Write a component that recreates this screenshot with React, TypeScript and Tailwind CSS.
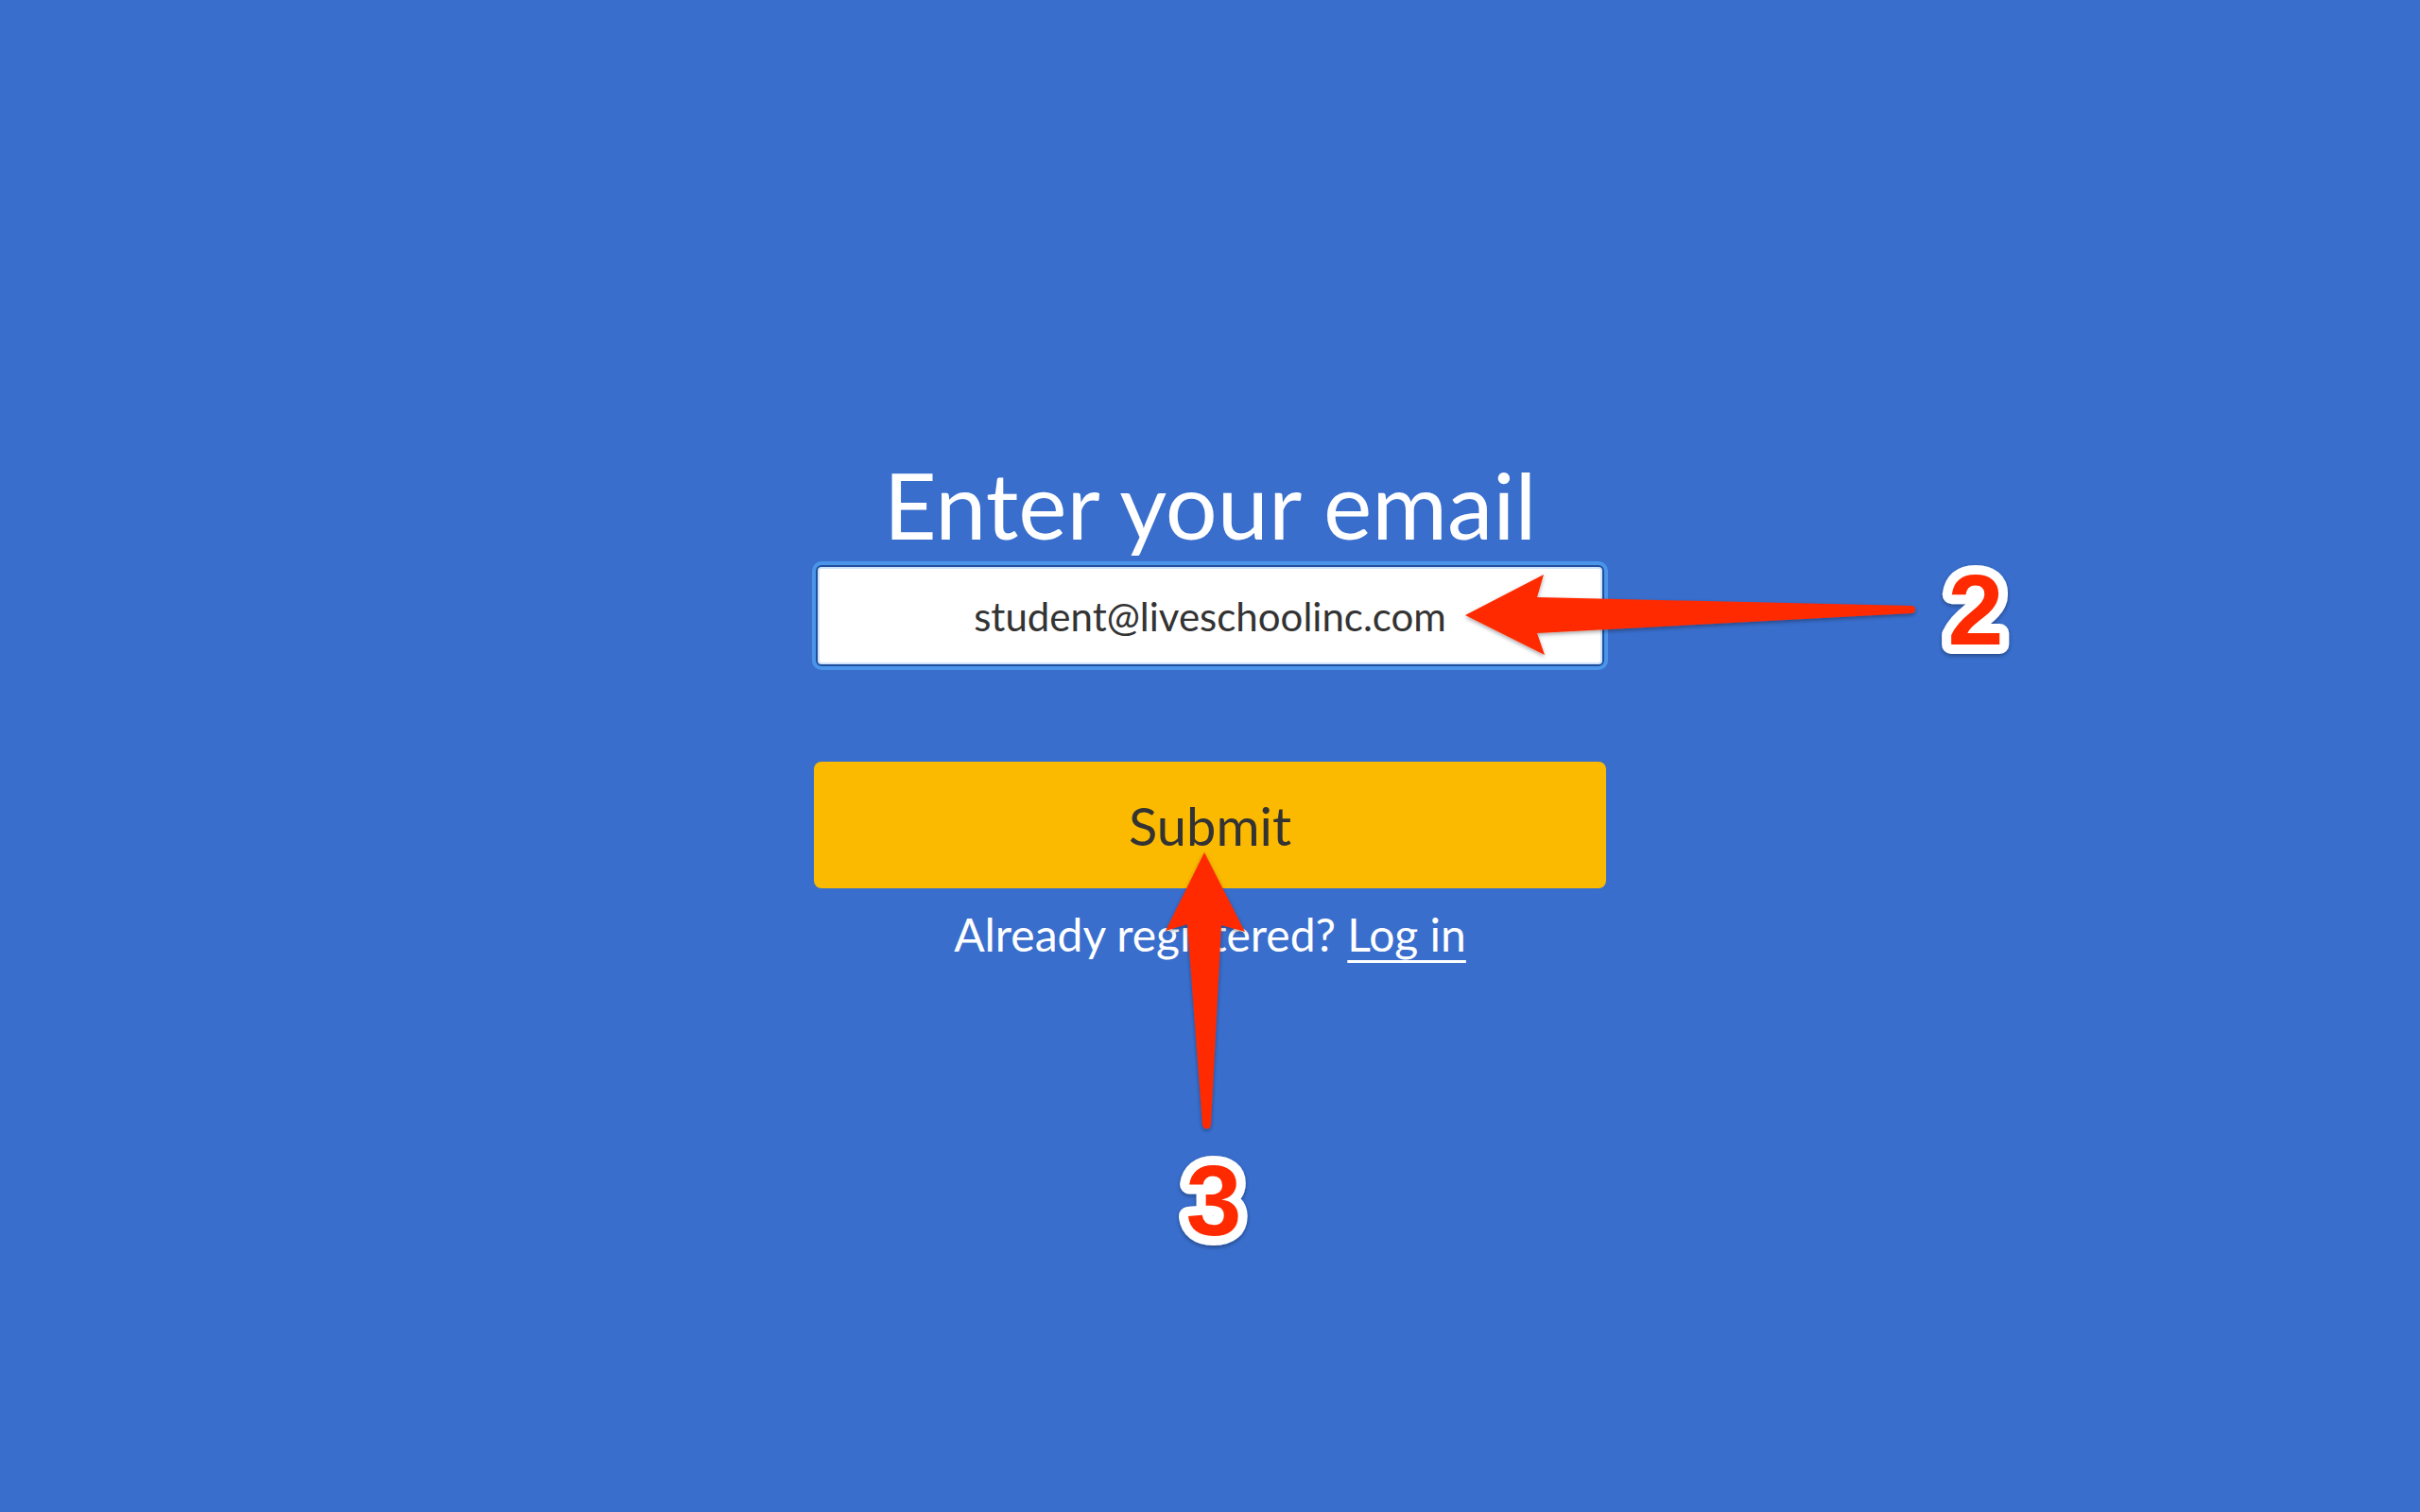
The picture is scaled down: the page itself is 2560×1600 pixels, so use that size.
import React from "react"

const RED = "#ff2a00"

// Annotation overlay: arrows + step numbers drawn on top of the form
const Annotations = () => (
  <svg
    className="pointer-events-none absolute left-0 top-0"
    width={2560}
    height={1600}
    viewBox="0 0 2560 1600"
  >
    <defs>
      <filter id="shadow" x="-20%" y="-20%" width="140%" height="140%">
        <feDropShadow dx="0" dy="2" stdDeviation="2" floodColor="#000" floodOpacity="0.35" />
      </filter>
    </defs>
    {/* arrow pointing at the email field */}
    <path
      d="M1550 651 L1633 608 L1626 632 L2022 641 A4 4 0 0 1 2022 649 L1626 670 L1634 693 Z"
      fill={RED}
      filter="url(#shadow)"
    />
    {/* arrow pointing at the submit button */}
    <path
      d="M1274 902 L1317 986 L1292 979 L1281 1190 A4.5 4.5 0 0 1 1272 1190 L1256 978 L1233 985 Z"
      fill={RED}
      filter="url(#shadow)"
    />
    <g
      fontFamily="'Liberation Sans', Arial, sans-serif"
      fontWeight={700}
      fontSize={106}
      textAnchor="middle"
      filter="url(#shadow)"
    >
      <text
        x={2090}
        y={682}
        fill={RED}
        stroke="#fff"
        strokeWidth={20}
        strokeLinejoin="round"
        paintOrder="stroke"
      >
        2
      </text>
      <text
        x={1284}
        y={1307}
        fill={RED}
        stroke="#fff"
        strokeWidth={20}
        strokeLinejoin="round"
        paintOrder="stroke"
      >
        3
      </text>
    </g>
  </svg>
)

export default function App() {
  return (
    <div className="relative min-h-screen w-full overflow-hidden bg-[#396ecd] font-['Lato','Open_Sans',sans-serif]">
      <div className="flex flex-col items-center pt-[476px]">
        <h1 className="text-[97px] font-normal leading-[1.2] text-white">
          Enter your email
        </h1>

        <input
          type="email"
          readOnly
          value="student@liveschoolinc.com"
          className="mt-[6px] h-[107px] w-[834px] rounded-[6px] border-2 border-[#1e4f9c] bg-white text-center text-[42px] leading-[1.2] text-[#333333] shadow-[0_0_0_4px_#4a95ea,inset_0_0_0_2px_#cfe4fb] outline-none"
        />

        <button
          type="button"
          className="mt-[101px] flex h-[134px] w-[838px] items-center justify-center rounded-[8px] bg-[#fbba00] text-[56px] leading-[1.2] text-[#333333]"
        >
          Submit
        </button>

        <p className="mt-[20px] text-[48px] leading-[1.2] text-white">
          Already registered?{" "}
          <a
            href="#"
            className="underline decoration-[3px] underline-offset-[9px]"
          >
            Log in
          </a>
        </p>
      </div>

      <Annotations />
    </div>
  )
}
